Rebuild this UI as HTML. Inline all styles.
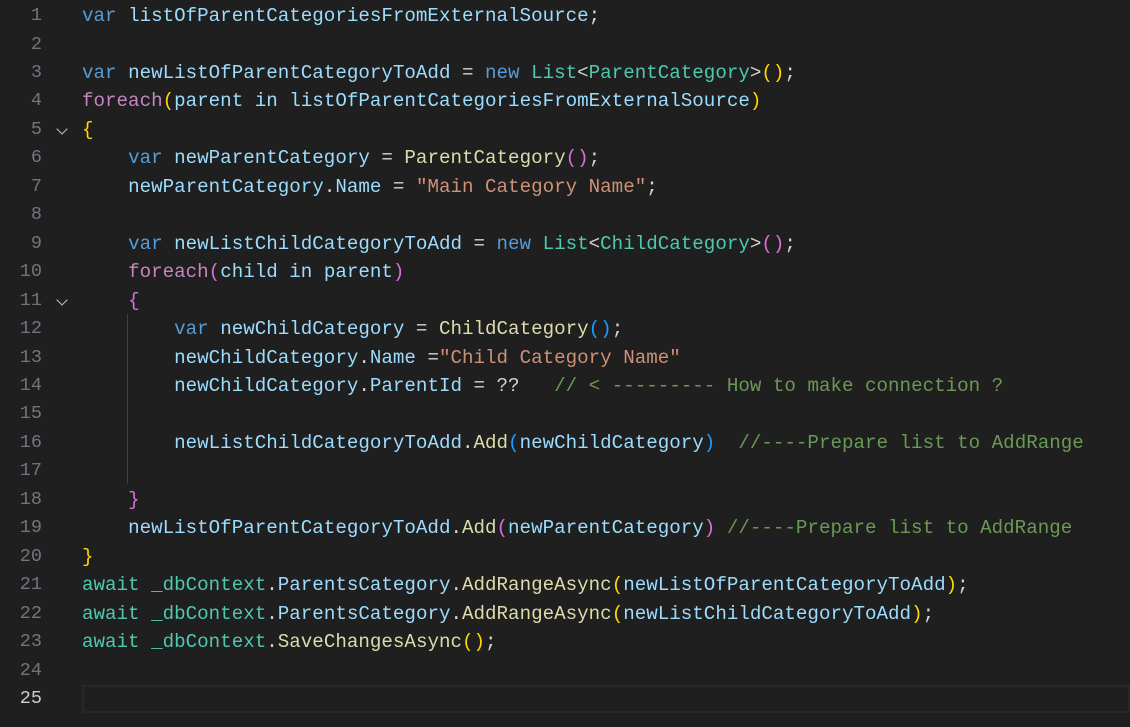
<!DOCTYPE html>
<html><head><style>
body{margin:0;background:#1f1f1f;width:1130px;height:727px;overflow:hidden;font-family:"Liberation Mono",monospace;font-size:19.2px;}
.l{position:absolute;left:0;height:28.46px;line-height:28.46px;width:1130px;white-space:pre;}
.n{position:absolute;right:1088px;color:#6e7681;text-align:right;font-size:18.5px;}
.c{position:absolute;left:82px;color:#d4d4d4;}
.k{color:#569cd6}.v{color:#9cdcfe}.t{color:#4ec9b0}.f{color:#dcdcaa}.p{color:#c586c0}.s{color:#ce9178}.m{color:#6a9955}
.y{color:#ffd700}.q{color:#da70d6}.b{color:#179fff}
.fold{position:absolute;left:58px;top:9px;width:7px;height:7px;border-right:1.5px solid #c5c5c5;border-bottom:1.5px solid #c5c5c5;transform:rotate(45deg);}
</style></head><body>
<div style="position:absolute;left:127px;top:314px;width:1px;height:170px;background:#404040"></div>
<div style="position:absolute;left:82px;top:685px;width:1048px;height:28px;box-sizing:border-box;border:2px solid #282828"></div>
<div class="l" style="top:2px"><span class="n">1</span><span class="c"><span class="k">var</span> <span class="v">listOfParentCategoriesFromExternalSource</span>;</span></div>
<div class="l" style="top:30.5px"><span class="n">2</span></div>
<div class="l" style="top:58.9px"><span class="n">3</span><span class="c"><span class="k">var</span> <span class="v">newListOfParentCategoryToAdd</span> = <span class="k">new</span> <span class="t">List</span>&lt;<span class="t">ParentCategory</span>&gt;<span class="y">()</span>;</span></div>
<div class="l" style="top:87.4px"><span class="n">4</span><span class="c"><span class="p">foreach</span><span class="y">(</span><span class="v">parent</span> <span class="v">in</span> <span class="v">listOfParentCategoriesFromExternalSource</span><span class="y">)</span></span></div>
<div class="l" style="top:115.8px"><span class="n">5</span><span class="fold"></span><span class="c"><span class="y">{</span></span></div>
<div class="l" style="top:144.3px"><span class="n">6</span><span class="c">    <span class="k">var</span> <span class="v">newParentCategory</span> = <span class="f">ParentCategory</span><span class="q">()</span>;</span></div>
<div class="l" style="top:172.8px"><span class="n">7</span><span class="c">    <span class="v">newParentCategory</span>.<span class="v">Name</span> = <span class="s">"Main Category Name"</span>;</span></div>
<div class="l" style="top:201.2px"><span class="n">8</span></div>
<div class="l" style="top:229.7px"><span class="n">9</span><span class="c">    <span class="k">var</span> <span class="v">newListChildCategoryToAdd</span> = <span class="k">new</span> <span class="t">List</span>&lt;<span class="t">ChildCategory</span>&gt;<span class="q">()</span>;</span></div>
<div class="l" style="top:258.1px"><span class="n">10</span><span class="c">    <span class="p">foreach</span><span class="q">(</span><span class="v">child</span> <span class="v">in</span> <span class="v">parent</span><span class="q">)</span></span></div>
<div class="l" style="top:286.6px"><span class="n">11</span><span class="fold"></span><span class="c">    <span class="q">{</span></span></div>
<div class="l" style="top:315px"><span class="n">12</span><span class="c">        <span class="k">var</span> <span class="v">newChildCategory</span> = <span class="f">ChildCategory</span><span class="b">()</span>;</span></div>
<div class="l" style="top:343.5px"><span class="n">13</span><span class="c">        <span class="v">newChildCategory</span>.<span class="v">Name</span> =<span class="s">"Child Category Name"</span></span></div>
<div class="l" style="top:372px"><span class="n">14</span><span class="c">        <span class="v">newChildCategory</span>.<span class="v">ParentId</span> = ??   <span class="m">// &lt; --------- How to make connection ?</span></span></div>
<div class="l" style="top:400.4px"><span class="n">15</span></div>
<div class="l" style="top:428.9px"><span class="n">16</span><span class="c">        <span class="v">newListChildCategoryToAdd</span>.<span class="f">Add</span><span class="b">(</span><span class="v">newChildCategory</span><span class="b">)</span>  <span class="m">//----Prepare list to AddRange</span></span></div>
<div class="l" style="top:457.3px"><span class="n">17</span></div>
<div class="l" style="top:485.8px"><span class="n">18</span><span class="c">    <span class="q">}</span></span></div>
<div class="l" style="top:514.2px"><span class="n">19</span><span class="c">    <span class="v">newListOfParentCategoryToAdd</span>.<span class="f">Add</span><span class="q">(</span><span class="v">newParentCategory</span><span class="q">)</span> <span class="m">//----Prepare list to AddRange</span></span></div>
<div class="l" style="top:542.7px"><span class="n">20</span><span class="c"><span class="y">}</span></span></div>
<div class="l" style="top:571.2px"><span class="n">21</span><span class="c"><span class="t">await</span> <span class="t">_dbContext</span>.<span class="v">ParentsCategory</span>.<span class="f">AddRangeAsync</span><span class="y">(</span><span class="v">newListOfParentCategoryToAdd</span><span class="y">)</span>;</span></div>
<div class="l" style="top:599.6px"><span class="n">22</span><span class="c"><span class="t">await</span> <span class="t">_dbContext</span>.<span class="v">ParentsCategory</span>.<span class="f">AddRangeAsync</span><span class="y">(</span><span class="v">newListChildCategoryToAdd</span><span class="y">)</span>;</span></div>
<div class="l" style="top:628.1px"><span class="n">23</span><span class="c"><span class="t">await</span> <span class="t">_dbContext</span>.<span class="f">SaveChangesAsync</span><span class="y">()</span>;</span></div>
<div class="l" style="top:656.5px"><span class="n">24</span></div>
<div class="l" style="top:685px"><span class="n" style="color:#cccccc">25</span></div>
</body></html>
